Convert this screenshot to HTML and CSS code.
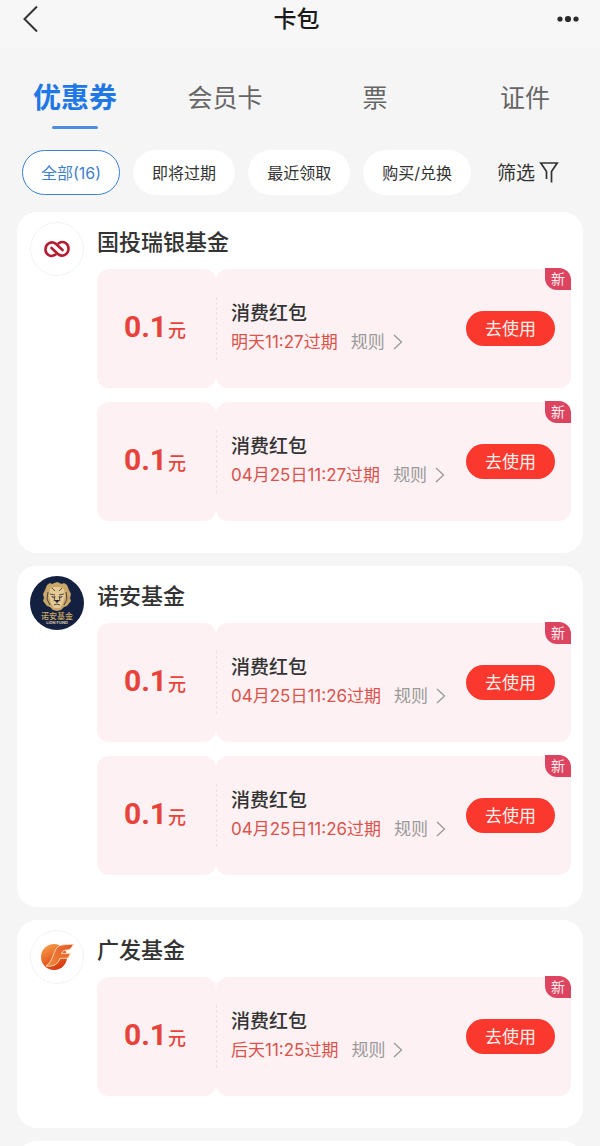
FILE: index.html
```html
<!DOCTYPE html>
<html lang="zh-CN">
<head>
    <meta charset="UTF-8">
    <meta name="viewport" content="width=device-width, initial-scale=1.0">
    <title>卡包</title>
    <link rel="stylesheet" href="styles.css">
</head>
<body>
    <div class="app">
        <header class="topbar">
            <button class="icon-btn" aria-label="返回">
                <svg width="18" height="28" viewBox="0 0 18 28" fill="none" stroke="#333" stroke-width="2"><path d="M15 1.5 2.5 14 15 26.5"/></svg>
            </button>
            <h1>卡包</h1>
            <button class="icon-btn more" aria-label="更多">
                <svg width="22" height="8" viewBox="0 0 22 8" fill="#2b2b2b"><circle cx="3" cy="4" r="2.6"/><circle cx="11" cy="4" r="3.1"/><circle cx="19" cy="4" r="2.6"/></svg>
            </button>
        </header>

        <nav class="tabs">
            <a href="#" class="active">优惠券</a>
            <a href="#">会员卡</a>
            <a href="#">票</a>
            <a href="#">证件</a>
        </nav>

        <div class="filters">
            <button class="chip selected">全部(16)</button>
            <button class="chip">即将过期</button>
            <button class="chip">最近领取</button>
            <button class="chip">购买/兑换</button>
            <button class="filter-btn">筛选
                <svg width="20" height="22" viewBox="0 0 20 22" fill="none" stroke="#333" stroke-width="1.7"><path d="M7.5 18V10.5L1.8 2H18.2L12.5 10.5V21.5"/></svg>
            </button>
        </div>

        <main class="list">
            <section class="card">
                <div class="logo">
                    <svg width="26" height="18" viewBox="0 0 26 18" fill="none" stroke="#b81c32" stroke-width="2.6" stroke-linecap="round"><path d="M11.5 14.7C6 18 1.3 14 1.5 9 1.7 3.6 7.5.6 11.5 3.6L18.5 10"/><path d="M14.5 3.3C20 0 24.7 4 24.5 9 24.3 14.4 18.5 17.4 14.5 14.4L7.5 8"/></svg>
                </div>
                <div class="card-body">
                    <h2>国投瑞银基金</h2>
                    <div class="coupon">
                        <div class="amount"><b>0.1</b>元</div>
                        <div class="detail">
                            <div class="info">
                                <h3>消费红包</h3>
                                <p>明天11:27过期<a href="#">规则<svg width="10" height="16" viewBox="0 0 10 16"><path d="M1 1 8.5 8 1 15"/></svg></a></p>
                            </div>
                            <button class="use">去使用</button>
                        </div>
                        <span class="badge">新</span>
                    </div>
                    <div class="coupon">
                        <div class="amount"><b>0.1</b>元</div>
                        <div class="detail">
                            <div class="info">
                                <h3>消费红包</h3>
                                <p>04月25日11:27过期<a href="#">规则<svg width="10" height="16" viewBox="0 0 10 16"><path d="M1 1 8.5 8 1 15"/></svg></a></p>
                            </div>
                            <button class="use">去使用</button>
                        </div>
                        <span class="badge">新</span>
                    </div>
                </div>
            </section>

            <section class="card">
                <div class="logo navy">
                    <svg width="54" height="54" viewBox="0 0 54 54">
                        <path fill="#c9a768" d="M17 9 20 7 22 8 27 6 32 8 34 7 37 9 39 14 41 18 40 22 41 25 37 30 34 31 31 34 27 35 23 34 20 31 17 30 13 25 14 22 13 18 15 14Z"/>
                        <path fill="#e4cb93" d="M20 13 24 11H30L34 13 35 20 33 27 30 32H24L21 27 19 20Z"/>
                        <g fill="none" stroke="#29263c" stroke-width="0.8"><path d="M20 18 25 19M34 18 29 19M25 20 24 25M29 20 30 25M24 29Q27 27 30 29M18 16 17 23 20 29M36 16 37 23 34 29M22 12 25 15M32 12 29 15"/></g>
                        <path fill="#29263c" d="M24 24H30L27 27ZM21 20 25 21 23 22ZM33 20 29 21 31 22Z"/>
                        <text class="logo-name" x="27" y="43" text-anchor="middle">诺安基金</text>
                        <text class="logo-sub" x="27" y="48" text-anchor="middle">LION FUND</text>
                    </svg>
                </div>
                <div class="card-body">
                    <h2>诺安基金</h2>
                    <div class="coupon">
                        <div class="amount"><b>0.1</b>元</div>
                        <div class="detail">
                            <div class="info">
                                <h3>消费红包</h3>
                                <p>04月25日11:26过期<a href="#">规则<svg width="10" height="16" viewBox="0 0 10 16"><path d="M1 1 8.5 8 1 15"/></svg></a></p>
                            </div>
                            <button class="use">去使用</button>
                        </div>
                        <span class="badge">新</span>
                    </div>
                    <div class="coupon">
                        <div class="amount"><b>0.1</b>元</div>
                        <div class="detail">
                            <div class="info">
                                <h3>消费红包</h3>
                                <p>04月25日11:26过期<a href="#">规则<svg width="10" height="16" viewBox="0 0 10 16"><path d="M1 1 8.5 8 1 15"/></svg></a></p>
                            </div>
                            <button class="use">去使用</button>
                        </div>
                        <span class="badge">新</span>
                    </div>
                </div>
            </section>

            <section class="card">
                <div class="logo">
                    <svg width="34" height="28" viewBox="0 0 34 28">
                        <defs>
                            <linearGradient id="ball" x1="0" y1="0" x2="0.5" y2="1"><stop offset="0" stop-color="#f9a64a"/><stop offset="1" stop-color="#da3a12"/></linearGradient>
                            <linearGradient id="flag" x1="1" y1="0" x2="0" y2="1"><stop offset="0" stop-color="#e4562a"/><stop offset="1" stop-color="#f08a3c"/></linearGradient>
                        </defs>
                        <circle cx="14" cy="14" r="13" fill="url(#ball)"/>
                        <path fill="url(#flag)" stroke="#fde3bd" stroke-width="0.9" d="M33.5 1C29 2 23 1 19 3 13 6 14 18 6 23 14 24 18 21 20 15.500C23 15 26 16 28.500 14.500L30.500 10C27 11 25 10.500 21.500 10.500 22.500 8 24 7 27 7 30 7 31.500 5 33.500 1Z"/>
                    </svg>
                </div>
                <div class="card-body">
                    <h2>广发基金</h2>
                    <div class="coupon">
                        <div class="amount"><b>0.1</b>元</div>
                        <div class="detail">
                            <div class="info">
                                <h3>消费红包</h3>
                                <p>后天11:25过期<a href="#">规则<svg width="10" height="16" viewBox="0 0 10 16"><path d="M1 1 8.5 8 1 15"/></svg></a></p>
                            </div>
                            <button class="use">去使用</button>
                        </div>
                        <span class="badge">新</span>
                    </div>
                </div>
            </section>

            <section class="card"></section>
        </main>
    </div>
</body>
</html>
```

FILE: styles.css
```css
* {
    box-sizing: border-box;
}
body {
    margin: 0;
    background: #f5f5f5;
    color: #333;
    font-family: Inter, "Noto Sans CJK SC", sans-serif;
}
h1, h2, h3, p {
    margin: 0;
    font-weight: 500;
}
button {
    border: none;
    padding: 0;
    font-family: inherit;
    color: inherit;
    cursor: pointer;
}
a {
    color: inherit;
    text-decoration: none;
}
svg {
    display: block;
    flex-shrink: 0;
}
.app {
    display: flex;
    flex-direction: column;
    height: 100vh;
}

/* header */
.topbar {
    display: flex;
    justify-content: space-between;
    align-items: center;
    height: 48px;
    padding: 0 21px 10px 22px;
    background: #f7f7f7;
}
.topbar h1 {
    font-size: 23px;
    line-height: 32px;
    color: #1a1a1a;
}
.icon-btn {
    display: flex;
    width: 24px;
    background: none;
}
.icon-btn.more {
    justify-content: flex-end;
    width: 32px;
}
.tabs {
    display: grid;
    grid-template-columns: repeat(4, 1fr);
    padding-top: 30px;
}
.tabs a {
    display: flex;
    flex-direction: column;
    align-items: center;
    height: 52px;
    font-size: 25px;
    line-height: 40px;
    color: #666;
}
.tabs .active {
    font-size: 28px;
    font-weight: 700;
    color: #1f78e6;
}
.tabs .active::after {
    content: "";
    width: 46px;
    height: 3px;
    margin-top: 8px;
    border-radius: 2px;
    background: #4f8de0;
}

/* filter chips */
.filters {
    display: flex;
    align-items: center;
    gap: 13px;
    padding: 20px 22px 17px;
}
.chip {
    height: 45px;
    padding: 0 19px 2px;
    border-radius: 23px;
    background: white;
    font-size: 16px;
    white-space: nowrap;
}
.chip.selected {
    padding: 0 18px 2px;
    border: 1px solid #3a80d4;
    color: #3f80cc;
}
.filter-btn {
    display: flex;
    align-items: center;
    gap: 4px;
    margin-left: 13px;
    padding-bottom: 2px;
    background: none;
    font-size: 19px;
    white-space: nowrap;
}

/* coupon list */
.list {
    flex: 1;
    min-height: 0;
    padding: 0 17px;
    overflow-y: auto;
    scrollbar-width: none;
}
.card {
    display: flex;
    gap: 13px;
    min-height: 207px;
    padding: 10px 12px 32px 13px;
    margin-bottom: 13px;
    border-radius: 20px;
    background: white;
}
.logo {
    display: flex;
    justify-content: center;
    align-items: center;
    flex-shrink: 0;
    width: 54px;
    height: 54px;
    border: 1px solid #f3f3f3;
    border-radius: 50%;
}
.logo.navy {
    border: none;
    background: #14203f;
}
.logo-name {
    font-size: 8px;
    font-weight: 500;
    fill: #c9a768;
}
.logo-sub {
    font-size: 4px;
    font-weight: 700;
    fill: #d8c9a8;
}
.card-body {
    flex: 1;
    min-width: 0;
    padding-top: 5px;
}
.card-body h2 {
    margin-bottom: 12px;
    font-size: 22px;
    line-height: 30px;
}
.coupon {
    position: relative;
    display: flex;
    height: 119px;
}
.coupon + .coupon {
    margin-top: 14px;
}
.amount {
    display: flex;
    justify-content: center;
    align-items: baseline;
    width: 119px;
    padding: 36px 3px 0 0;
    border-radius: 12px;
    background: #fdf1f3;
    color: #e8433b;
    font-size: 18px;
    font-weight: 500;
    line-height: 44px;
}
.amount b {
    margin-right: 1px;
    font-family: Roboto, sans-serif;
    font-size: 30px;
}
.detail {
    position: relative;
    flex: 1;
    display: flex;
    justify-content: space-between;
    align-items: center;
    padding: 0 16px 0 15px;
    border-radius: 12px;
    background: #fdf1f3;
}
.detail::before {
    content: "";
    position: absolute;
    left: 0;
    top: 28px;
    bottom: 28px;
    border-left: 1px dashed #f3dfe2;
}
.info {
    padding-bottom: 2px;
}
.info h3 {
    font-size: 19px;
    line-height: 28px;
}
.info p {
    display: flex;
    font-size: 17px;
    font-weight: 400;
    line-height: 28px;
    color: #d9534c;
}
.info a {
    display: flex;
    align-items: center;
    gap: 8px;
    margin-left: 13px;
    color: #999;
}
.info a svg {
    fill: none;
    stroke: #999;
    stroke-width: 1.3;
}
.use {
    width: 89px;
    height: 35px;
    padding-bottom: 2px;
    border-radius: 18px;
    background: #fb382d;
    color: #fff0ee;
    font-size: 17px;
}
.badge {
    position: absolute;
    top: -1px;
    right: 0;
    width: 26px;
    height: 22px;
    border-radius: 0 12px 0 12px;
    background: #dc4460;
    color: #ffeef0;
    font-size: 14px;
    line-height: 22px;
    text-align: center;
}
```
